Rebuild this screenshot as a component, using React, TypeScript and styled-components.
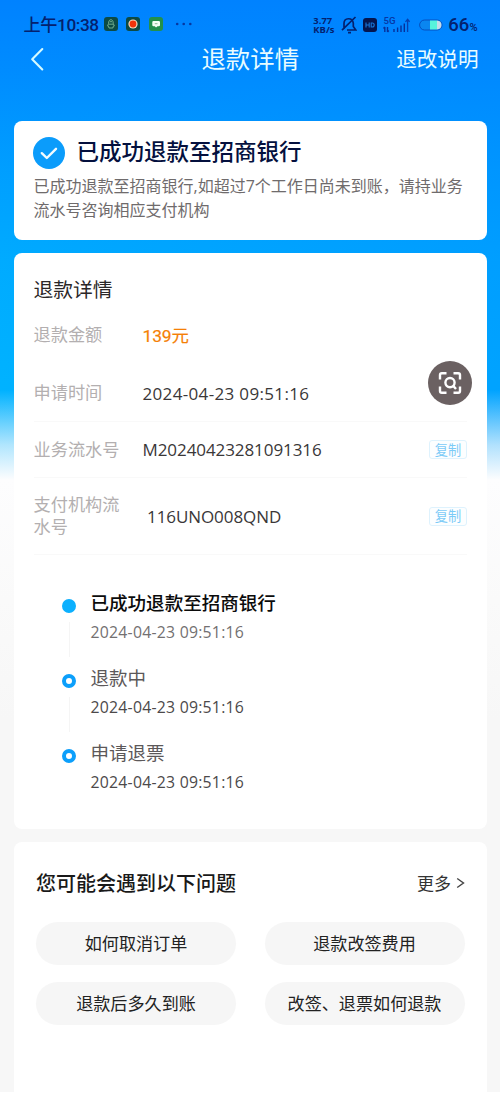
import React from "react";
import styled, { createGlobalStyle } from "styled-components";

const GlobalStyle = createGlobalStyle`
  * { box-sizing: border-box; }
  body { margin: 0; background: #fff; }
`;

const cjk = `"Noto Sans CJK SC", sans-serif`;
const latin = `"Open Sans", "Noto Sans CJK SC", sans-serif`;
const compact = `Roboto, "Noto Sans CJK SC", sans-serif`;

const Page = styled.div`
  width: 500px;
  height: 1098px;
  overflow: hidden;
  font-family: ${cjk};
  background: #fff;
`;

const Screen = styled.div`
  height: 1092px;
  display: flex;
  flex-direction: column;
  padding: 0 13px 0 13.5px;
  background:
    linear-gradient(180deg, rgba(250, 250, 250, 0) 390px, rgba(252, 252, 253, 0.7) 445px, #fdfdfe 480px, #fafafa 600px, #f7f7f7 720px),
    linear-gradient(100deg, rgba(0, 184, 255, 0) 0%, rgba(0, 130, 255, 0.42) 100%),
    linear-gradient(180deg, #0082ff 0, #008cff 70px, #009fff 170px, #00acff 260px, #00b4ff 380px);
`;

const StatusBar = styled.div`
  height: 40px;
  padding: 9px 9.5px 0 10px;
  display: flex;
  align-items: center;
  color: #04216e;
`;

const Clock = styled.div`
  font: 500 17.2px/30px ${compact};
  letter-spacing: -0.4px;
  width: 80px;
  white-space: nowrap;
`;

const AppIcons = styled.div`
  display: flex;
  align-items: center;
  gap: 8.7px;
  flex: 1;
  padding-bottom: 1px;
`;

const NetSpeed = styled.div`
  display: flex;
  flex-direction: column;
  width: 28px;
  font: 700 9.4px/9px ${latin};
  white-space: nowrap;
`;

const SignalIcons = styled.div`
  display: flex;
  align-items: center;
  gap: 6px;
  margin-right: 9px;
`;

const Battery = styled.div`
  font: 500 18.5px/30px ${compact};
  display: flex;
  align-items: baseline;
  margin-left: 5px;
  padding-top: 3px;
`;

const Percent = styled.span`
  font-size: 11px;
`;

const NavBar = styled.div`
  height: 81px;
  display: grid;
  grid-template-columns: 1fr auto 1fr;
  align-items: start;
  color: #e9fcff;
`;

const BackButton = styled.div`
  padding: 7px 0 0 16px;
  line-height: 0;
`;

const NavTitle = styled.div`
  font-size: 24.4px;
  line-height: 36px;
`;

const NavAction = styled.div`
  justify-self: end;
  padding-right: 8.5px;
  font-size: 20.6px;
  line-height: 36px;
`;

const Card = styled.section<{ $h: number; $flat?: boolean }>`
  flex: none;
  height: ${(p) => p.$h}px;
  margin-bottom: ${(p) => (p.$flat ? 0 : 13)}px;
  background: #fff;
  border-radius: ${(p) => (p.$flat ? "8px 8px 0 0" : "8px")};
  padding: 0 20px;
`;

const ResultHead = styled.div`
  display: flex;
  align-items: center;
  gap: 12px;
  padding-top: 14px;
  height: 49px;
  margin-left: -1px;
`;

const ResultTitle = styled.h1`
  margin: -5px 0 0;
  font-size: 22.5px;
  line-height: 32px;
  font-weight: 500;
  color: #04103e;
`;

const ResultText = styled.p`
  margin: 5px 0 0;
  font: 400 16px/23.5px ${latin};
  color: #6f6b6c;
  white-space: nowrap;
`;

const SectionTitle = styled.h2`
  margin: 0;
  height: 53px;
  padding-top: 20px;
  font-size: 19.8px;
  line-height: 31px;
  font-weight: 400;
  color: #2b2728;
`;

const DetailRow = styled.div<{ $h: number; $line?: boolean }>`
  height: ${(p) => p.$h}px;
  display: flex;
  align-items: center;
  border-bottom: 1px solid ${(p) => (p.$line ? "#f9f9f9" : "transparent")};
`;

const Label = styled.div`
  width: 109px;
  font-size: 17.2px;
  line-height: 22px;
  margin-top: -2px;
  color: #b3afb0;
`;

const Value = styled.div<{ $tight?: boolean; $indent?: boolean }>`
  flex: 1;
  font: 400 17px/24px ${latin};
  letter-spacing: ${(p) => (p.$tight ? -0.08 : 0.34)}px;
  padding: 1px 0 0 ${(p) => (p.$indent ? 4.5 : 0)}px;
  color: #3a3738;
  white-space: nowrap;
`;

const Amount = styled.div`
  font: 400 17.4px/24px ${compact};
  letter-spacing: -0.1px;
  padding-top: 1px;
  color: #f57f06;
  -webkit-text-stroke: 0.2px #f57f06;
`;

const CopyButton = styled.button`
  width: 38px;
  height: 19px;
  padding: 0;
  border: 1px solid #def2fd;
  border-radius: 3px;
  background: #fcfeff;
  color: #7ccbf7;
  font: 400 13.2px/16px ${cjk};
`;

const ScanButton = styled.div`
  width: 44px;
  height: 44px;
  margin: -21px -5px 0 0;
  border-radius: 50%;
  background: #6b6162;
  display: flex;
  align-items: center;
  justify-content: center;
`;

const Timeline = styled.div`
  padding: 34px 0 0 28px;
`;

const Step = styled.div`
  display: flex;
  height: 75px;
`;

const Rail = styled.div`
  width: 15px;
  margin-right: 14px;
  padding-top: 9.5px;
  display: flex;
  flex-direction: column;
  align-items: center;
`;

const Dot = styled.div<{ $hollow?: boolean }>`
  width: 14px;
  height: 14px;
  flex: none;
  border-radius: 50%;
  border: ${(p) => (p.$hollow ? "4px solid #0c9ffb" : "7px solid #0cb0fe")};
  background: #fff;
`;

const Line = styled.div`
  width: 1px;
  height: 35px;
  margin-top: 9px;
  background: #f5f5f5;
`;

const StepTitle = styled.div<{ $active?: boolean }>`
  font-size: 18.55px;
  line-height: 25px;
  font-weight: ${(p) => (p.$active ? 500 : 400)};
  color: ${(p) => (p.$active ? "#0b0b0b" : "#5c5859")};
`;

const StepTime = styled.div<{ $dark?: boolean }>`
  font: 400 15.8px/24px ${latin};
  letter-spacing: 0.24px;
  margin-top: 6px;
  color: ${(p) => (p.$dark ? "#4c494a" : "#737071")};
`;

const FaqHead = styled.div`
  display: flex;
  justify-content: space-between;
  align-items: center;
  height: 80px;
  padding: 1px 2px 0 2.5px;
`;

const FaqTitle = styled.h2`
  margin: 0;
  font-size: 20px;
  font-weight: 500;
  color: #191919;
`;

const More = styled.div`
  display: flex;
  align-items: center;
  gap: 5px;
  font-size: 17px;
  color: #333;
`;

const FaqGrid = styled.div`
  display: grid;
  grid-template-columns: 200px 200px;
  justify-content: space-between;
  row-gap: 17px;
  padding: 0 2.5px;
`;

const Pill = styled.div`
  height: 43px;
  border-radius: 22px;
  background: #f6f6f6;
  text-align: center;
  font-size: 17.1px;
  line-height: 42px;
  color: #222;
`;

const QqIcon = () => (
  <svg width="14" height="14" viewBox="0 0 14 14">
    <rect width="14" height="14" rx="3" fill="#0c4b45" />
    <path d="M4.6 6.3C4.3 1.5 9.5 1.5 9.2 6.3L10.3 9 9.3 9.2 8.9 11H5L4.5 9.2 3.6 9Z M4.8 7.2H9.2 M5.8 4.7H8" fill="none" stroke="#7cb894" strokeWidth="0.9" />
  </svg>
);

const RecordIcon = () => (
  <svg width="14" height="14" viewBox="0 0 14 14">
    <rect width="14" height="14" rx="3" fill="#0d4a44" />
    <circle cx="7" cy="7" r="4.6" fill="#f4dfc0" />
    <circle cx="7" cy="7" r="3.4" fill="#f0330b" />
  </svg>
);

const ChatIcon = () => (
  <svg width="14" height="14" viewBox="0 0 14 14">
    <rect width="14" height="14" rx="3" fill="#23904a" />
    <path d="M4.5 4H9.8Q11 4 11 5.2V8Q11 9.2 9.8 9.2H8.5L7 10.4 5.8 9.2H4.5Q3.3 9.2 3.3 8V5.2Q3.3 4 4.5 4Z" fill="#f4fff2" />
    <path d="M5.8 6.7H8.5" stroke="#6fa878" strokeWidth="0.8" />
  </svg>
);

const DotsSvg = styled.svg`
  margin-left: 3px;
`;

const DotsIcon = () => (
  <DotsSvg width="18" height="4" viewBox="0 0 18 4">
    <g fill="#0637a0">
      <circle cx="2.2" cy="2" r="1.3" />
      <circle cx="8.7" cy="2" r="1.3" />
      <circle cx="15.3" cy="2" r="1.3" />
    </g>
  </DotsSvg>
);

const MuteIcon = () => (
  <svg width="16" height="18" viewBox="0 0 16 18" fill="none" stroke="#04216e" strokeWidth="1.7">
    <path d="M3 13V7.5C3 1.5 11.5 1 12.3 7.2V10.5L14.8 14H6 M1 14.2L14.5 1 M7 16.6H10" />
  </svg>
);

const HdIcon = () => (
  <svg width="14" height="14" viewBox="0 0 14 14">
    <rect width="14" height="14" rx="3" fill="#04154e" />
    <path d="M3 4.5V9.5M6.2 4.5V9.5M3 7H6.2M8.2 5V9H9.2Q11.2 9 11.2 7T9.2 5Z" fill="none" stroke="#1877da" strokeWidth="1.1" />
  </svg>
);

const SignalIcon = () => (
  <svg width="27" height="22" viewBox="0 -3 27 22">
    <text x="0.6" y="7.4" fontFamily="Roboto, sans-serif" fontSize="9.6" fontWeight="500" fill="#0636a4">5G</text>
    <path d="M1.8 10V15M.5 11.5L1.8 10M4.5 10V15M4.5 15L5.8 13.5M11 12V15M14.6 10.5V15M18 8.5V15M21.3 6.5V15" stroke="#06309a" strokeWidth="1.4" fill="none" />
    <path d="M24.6 15V2.5M22.5 4.8L24.6 2.3 26.6 4.8" stroke="#0640b0" strokeWidth="1.3" fill="none" />
  </svg>
);

const BatteryIcon = () => (
  <svg width="24" height="12" viewBox="0 0 24 12">
    <rect x="0.6" y="1" width="22.4" height="10" rx="5" fill="#0a86f0" stroke="#0650c0" />
    <path d="M11 1.5H18V10.5H11Z" fill="#56f3dc" />
    <path d="M18 1.5Q22.5 1.8 22.5 6T18 10.5Z" fill="#c5dcea" />
  </svg>
);

const CheckBadge = () => (
  <svg width="32" height="32" viewBox="0 0 32 32">
    <circle cx="16" cy="16" r="16" fill="#0b9cfb" />
    <path d="M8.8 16.2L13.8 21 23 11.8" fill="none" stroke="#f2fbff" strokeWidth="2.4" strokeLinecap="round" strokeLinejoin="round" />
  </svg>
);

const ScanIcon = () => (
  <svg width="24" height="24" viewBox="0 0 24 24" fill="none" stroke="#fff" strokeWidth="2.4">
    <path d="M2 8.5V4Q2 2.2 3.8 2.2H8.5M15.5 2.2H20.2Q22 2.2 22 4V8.5M22 15.5V20Q22 21.8 20.2 21.8H15.5M8.5 21.8H3.8Q2 21.8 2 20V15.5" />
    <circle cx="12" cy="11.6" r="4.6" />
    <path d="M15 14.6L18 18" />
  </svg>
);

const steps = [
  { title: "已成功退款至招商银行", active: true },
  { title: "退款中", active: false },
  { title: "申请退票", active: false },
];

const questions = ["如何取消订单", "退款改签费用", "退款后多久到账", "改签、退票如何退款"];

export default function App() {
  return (
    <Page>
      <GlobalStyle />
      <Screen>
        <StatusBar>
          <Clock>上午10:38</Clock>
          <AppIcons>
            <QqIcon />
            <RecordIcon />
            <ChatIcon />
            <DotsIcon />
          </AppIcons>
          <NetSpeed>
            <span>3.77</span>
            <span>KB/s</span>
          </NetSpeed>
          <SignalIcons>
            <MuteIcon />
            <HdIcon />
            <SignalIcon />
          </SignalIcons>
          <BatteryIcon />
          <Battery>
            66<Percent>%</Percent>
          </Battery>
        </StatusBar>
        <NavBar>
          <BackButton>
            <svg width="14" height="24" viewBox="0 0 14 24">
              <path d="M12.3 2L2.2 12.2 12.3 22.4" fill="none" stroke="#d4faff" strokeWidth="2.1" strokeLinecap="round" strokeLinejoin="round" />
            </svg>
          </BackButton>
          <NavTitle>退款详情</NavTitle>
          <NavAction>退改说明</NavAction>
        </NavBar>

        <Card $h={119}>
          <ResultHead>
            <CheckBadge />
            <ResultTitle>已成功退款至招商银行</ResultTitle>
          </ResultHead>
          <ResultText>
            已成功退款至招商银行,如超过7个工作日尚未到账，请持业务
            <br />
            流水号咨询相应支付机构
          </ResultText>
        </Card>

        <Card $h={576}>
          <SectionTitle>退款详情</SectionTitle>
          <DetailRow $h={59}>
            <Label>退款金额</Label>
            <Amount>139元</Amount>
          </DetailRow>
          <DetailRow $h={57} $line>
            <Label>申请时间</Label>
            <Value>2024-04-23 09:51:16</Value>
            <ScanButton>
              <ScanIcon />
            </ScanButton>
          </DetailRow>
          <DetailRow $h={56} $line>
            <Label>业务流水号</Label>
            <Value $tight>M20240423281091316</Value>
            <CopyButton>复制</CopyButton>
          </DetailRow>
          <DetailRow $h={77} $line>
            <Label>
              支付机构流
              <br />
              水号
            </Label>
            <Value $tight $indent>116UNO008QND</Value>
            <CopyButton>复制</CopyButton>
          </DetailRow>
          <Timeline>
            {steps.map((s, i) => (
              <Step key={s.title}>
                <Rail>
                  <Dot $hollow={!s.active} />
                  {i < steps.length - 1 && <Line />}
                </Rail>
                <div>
                  <StepTitle $active={s.active}>{s.title}</StepTitle>
                  <StepTime $dark={i > 0}>2024-04-23 09:51:16</StepTime>
                </div>
              </Step>
            ))}
          </Timeline>
        </Card>

        <Card $h={250} $flat>
          <FaqHead>
            <FaqTitle>您可能会遇到以下问题</FaqTitle>
            <More>
              更多
              <svg width="9" height="12" viewBox="0 0 9 12">
                <path d="M1.2 1.5L7.5 6 1.2 10.5" fill="none" stroke="#444" strokeWidth="1.4" />
              </svg>
            </More>
          </FaqHead>
          <FaqGrid>
            {questions.map((q) => (
              <Pill key={q}>{q}</Pill>
            ))}
          </FaqGrid>
        </Card>
      </Screen>
    </Page>
  );
}
